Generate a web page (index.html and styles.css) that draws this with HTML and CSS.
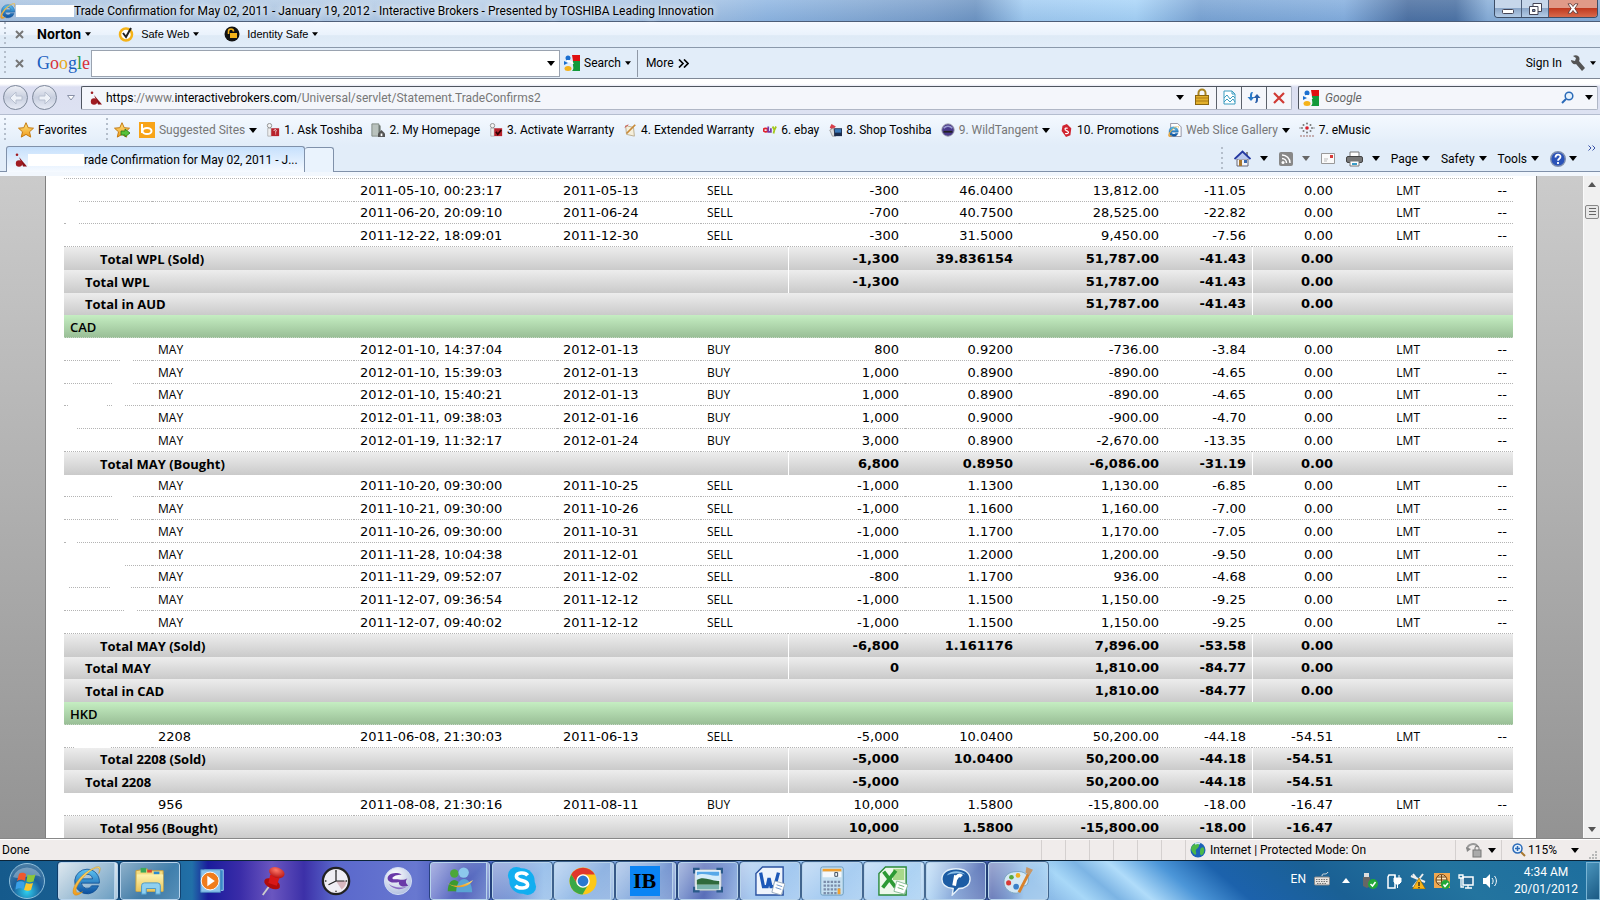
FILE: index.html
```html
<!DOCTYPE HTML>
<html lang="en-US">
<head>
	<meta charset="UTF-8" />
	<title>Trade Confirmation for May 02, 2011 - January 19, 2012</title>

	<link rel="stylesheet" href="styles.css">

	<script type="text/javascript">
		// t: trade row, s: symbol total, c: currency header
		// trade: symbol, date/time, settle date, side, qty, price, proceeds, comm, fee, gaps
		var rows = [
			['t', '', '2011-05-10, 00:23:17', '2011-05-13', 'SELL', '-300', '46.0400', '13,812.00', '-11.05', '0.00', [0, 15]],
			['t', '', '2011-06-20, 20:09:10', '2011-06-24', 'SELL', '-700', '40.7500', '28,525.00', '-22.82', '0.00', [2, 13]],
			['t', '', '2011-12-22, 18:09:01', '2011-12-30', 'SELL', '-300', '31.5000', '9,450.00', '-7.56', '0.00', []],
			['s', 'Total WPL (Sold)', '-1,300', '39.836154', '51,787.00', '-41.43', '0.00', 'sub'],
			['s', 'Total WPL', '-1,300', '', '51,787.00', '-41.43', '0.00', ''],
			['s', 'Total in AUD', '', '', '51,787.00', '-41.43', '0.00', 'sum'],
			['c', 'CAD'],
			['t', 'MAY', '2012-01-10, 14:37:04', '2012-01-13', 'BUY', '800', '0.9200', '-736.00', '-3.84', '0.00', [56, 13]],
			['t', 'MAY', '2012-01-10, 15:39:03', '2012-01-13', 'BUY', '1,000', '0.8900', '-890.00', '-4.65', '0.00', [48, 21]],
			['t', 'MAY', '2012-01-10, 15:40:21', '2012-01-13', 'BUY', '1,000', '0.8900', '-890.00', '-4.65', '0.00', [4, 39, 49, 12]],
			['t', 'MAY', '2012-01-11, 09:38:03', '2012-01-16', 'BUY', '1,000', '0.9000', '-900.00', '-4.70', '0.00', [0, 13]],
			['t', 'MAY', '2012-01-19, 11:32:17', '2012-01-24', 'BUY', '3,000', '0.8900', '-2,670.00', '-13.35', '0.00', []],
			['s', 'Total MAY (Bought)', '6,800', '0.8950', '-6,086.00', '-31.19', '0.00', 'sub'],
			['t', 'MAY', '2011-10-20, 09:30:00', '2011-10-25', 'SELL', '-1,000', '1.1300', '1,130.00', '-6.85', '0.00', [48, 21]],
			['t', 'MAY', '2011-10-21, 09:30:00', '2011-10-26', 'SELL', '-1,000', '1.1600', '1,160.00', '-7.00', '0.00', [54, 13]],
			['t', 'MAY', '2011-10-26, 09:30:00', '2011-10-31', 'SELL', '-1,000', '1.1700', '1,170.00', '-7.05', '0.00', [2, 11]],
			['t', 'MAY', '2011-11-28, 10:04:38', '2011-12-01', 'SELL', '-1,000', '1.2000', '1,200.00', '-9.50', '0.00', [0, 61]],
			['t', 'MAY', '2011-11-29, 09:52:07', '2011-12-02', 'SELL', '-800', '1.1700', '936.00', '-4.68', '0.00', [0, 5, 46, 21]],
			['t', 'MAY', '2011-12-07, 09:36:54', '2011-12-12', 'SELL', '-1,000', '1.1500', '1,150.00', '-9.25', '0.00', [60, 13]],
			['t', 'MAY', '2011-12-07, 09:40:02', '2011-12-12', 'SELL', '-1,000', '1.1500', '1,150.00', '-9.25', '0.00', []],
			['s', 'Total MAY (Sold)', '-6,800', '1.161176', '7,896.00', '-53.58', '0.00', 'sub'],
			['s', 'Total MAY', '0', '', '1,810.00', '-84.77', '0.00', ''],
			['s', 'Total in CAD', '', '', '1,810.00', '-84.77', '0.00', 'sum'],
			['c', 'HKD'],
			['t', '2208', '2011-06-08, 21:30:03', '2011-06-13', 'SELL', '-5,000', '10.0400', '50,200.00', '-44.18', '-54.51', [10, 37]],
			['s', 'Total 2208 (Sold)', '-5,000', '10.0400', '50,200.00', '-44.18', '-54.51', 'sub'],
			['s', 'Total 2208', '-5,000', '', '50,200.00', '-44.18', '-54.51', ''],
			['t', '956', '2011-08-08, 21:30:16', '2011-08-11', 'BUY', '10,000', '1.5800', '-15,800.00', '-18.00', '-16.47', []],
			['s', 'Total 956 (Bought)', '10,000', '1.5800', '-15,800.00', '-18.00', '-16.47', 'sub']
		];

		function addCell(tr, text, className, span){
			var td = document.createElement('td');
			td.className = className;
			if(span){
				td.colSpan = span;
			}
			td.appendChild(document.createTextNode(text));
			tr.appendChild(td);
			return td;
		}

		function addTrade(tr, r){
			var first = addCell(tr, '', 'acct');
			var gaps = r[10];
			for(var i=0; i<gaps.length; i+=2){
				var gap = document.createElement('span');
				gap.className = 'gap';
				gap.style.left = gaps[i] + 'px';
				gap.style.width = gaps[i+1] + 'px';
				first.appendChild(gap);
			}
			addCell(tr, r[1], /^\d/.test(r[1]) ? 'num' : 'code');
			addCell(tr, r[2], 'num');
			addCell(tr, r[3], 'num');
			addCell(tr, r[4], 'code');
			for(i=5; i<10; i++){
				addCell(tr, r[i], 'right num');
			}
			addCell(tr, 'LMT', 'right code');
			addCell(tr, '--', 'right num');
		}

		function addTotal(tr, r){
			addCell(tr, r[1], 'label', 5);
			addCell(tr, r[2], 'right num' + (r[7]==='sum' ? '' : ' rule'));
			addCell(tr, r[3], 'right num');
			addCell(tr, r[4], 'right num');
			addCell(tr, r[5], 'right num');
			addCell(tr, r[6], 'right num rule');
			addCell(tr, '', 'label', 2);
		}

		window.onload = function(){
			var body = document.getElementById('trades');
			for(var i=0; i<rows.length; i++){
				var tr = document.createElement('tr');
				if(rows[i][0]==='t'){
					tr.className = 'trade';
					addTrade(tr, rows[i]);
				} else if(rows[i][0]==='s'){
					tr.className = 'total ' + rows[i][7];
					addTotal(tr, rows[i]);
				} else {
					tr.className = 'currency';
					addCell(tr, rows[i][1], '', 12);
				}
				body.appendChild(tr);
			}
		};
	</script>
</head>

<body>
	<svg class="defs" aria-hidden="true">
		<defs>
			<linearGradient id="gold" x1="0" y1="0" x2="0" y2="1"><stop offset="0" stop-color="#ffe680"/><stop offset="1" stop-color="#f09a1c"/></linearGradient>
			<linearGradient id="ieBlue" x1="0" y1="0" x2="0" y2="1"><stop offset="0" stop-color="#5cc4f4"/><stop offset="1" stop-color="#0b4f9e"/></linearGradient>
			<linearGradient id="folder" x1="0" y1="0" x2="0" y2="1"><stop offset="0" stop-color="#fdf3b0"/><stop offset="1" stop-color="#e9c55a"/></linearGradient>
			<radialGradient id="orb" cx=".5" cy=".8" r=".8"><stop offset="0" stop-color="#2fd0f0"/><stop offset=".5" stop-color="#1a5f9a"/><stop offset="1" stop-color="#4f7fa5"/></radialGradient>
			<radialGradient id="ball" cx=".4" cy=".3" r=".8"><stop offset="0" stop-color="#ffffff"/><stop offset="1" stop-color="#a9b9dc"/></radialGradient>
			<radialGradient id="redBall" cx=".4" cy=".3" r=".8"><stop offset="0" stop-color="#ff7a6a"/><stop offset="1" stop-color="#b00808"/></radialGradient>
		</defs>
		<symbol id="caret" viewBox="0 0 8 5"><path d="M0 0h8L4 5z" fill="currentColor"/></symbol>
		<symbol id="ie" viewBox="2 2 28 28"><path d="M16 5a11.5 11.5 0 1 0 10.800 15.500h-6.300a5.300 5.300 0 0 1-9.700-2.500h16.700A11.5 11.5 0 0 0 16 5zm-5.200 9a5.300 5.300 0 0 1 10.400 0z" fill="url(#ieBlue)" stroke="#0a4a90" stroke-width=".7"/><path d="M27 9c3-6 1-8-5-5C12 8 2 20 3 27c1 4 6 2 9-1-5 2-7 1-6-3C8 16 18 6 24 4c4-1 4 1 3 5z" fill="url(#gold)" stroke="#c98a10" stroke-width=".4"/></symbol>
		<symbol id="star" viewBox="0 0 16 16"><path d="M8 .7l2.200 5 5.300.5-4 3.600 1.200 5.300L8 12.400l-4.700 2.700 1.200-5.300-4-3.600 5.300-.5z" fill="url(#gold)" stroke="#c47a10"/></symbol>
		<symbol id="ibkr" viewBox="0 0 12 14"><circle cx="2" cy="1.700" r="1.300" fill="#a01c22"/><path d="M4 4l8 9.500H8z" fill="#8c1218"/><circle cx="4" cy="10.500" r="3.200" fill="#a01c22"/></symbol>
		<symbol id="gg" viewBox="0 0 16 16"><path d="M8 0h8v6h-7z" fill="#e01010"/><path d="M9 6h7v10H8c3-3 0-5 1-10z" fill="#139a3a"/><circle cx="4" cy="3" r="2.500" fill="#1b6fd0"/><path d="M0 6l4 2-4 2z" fill="#1b6fd0"/><ellipse cx="4" cy="13.500" rx="3.500" ry="2.500" fill="#f5b21a"/><path d="M3 6c3 0 5 1 6 3" stroke="#fff" stroke-width="2" fill="none"/></symbol>
		<symbol id="shopper" viewBox="0 0 16 16"><circle cx="4" cy="3" r="2.500" fill="#f4f4f4" stroke="#888"/><path d="M2 6h4v9H2z" fill="#eee" stroke="#999" stroke-width=".7"/><path d="M6 6h9v9H6z" fill="#b8222c"/></symbol>
	</svg>

	<header class="title-bar">
		<svg class="i16"><use href="#ie"/></svg>
		<span class="redacted"></span>
		<h1>Trade Confirmation for May 02, 2011 - January 19, 2012 - Interactive Brokers - Presented by TOSHIBA Leading Innovation</h1>
		<div class="window-buttons">
			<button type="button" aria-label="Minimize"><svg width="12" height="12" viewBox="0 0 12 12"><rect x=".5" y="6.500" width="11" height="4" rx="1" fill="#fff" stroke="#445"/></svg></button>
			<button type="button" aria-label="Restore"><svg width="13" height="12" viewBox="0 0 13 12"><path d="M4 .5h8.500v8H4z" fill="#fff" stroke="#445"/><path d="M.5 3.500H9v8H.5z" fill="#fff" stroke="#445"/><path d="M3.500 6.500H6v2H3.500z" fill="#7a93b8" stroke="#445"/></svg></button>
			<button type="button" class="close" aria-label="Close"><svg width="12" height="11" viewBox="0 0 12 11"><path d="M1 .8h3l2 2.700 2-2.700h3L7.800 5.500 11 10.200H8L6 7.500l-2 2.700H1l3.200-4.700z" fill="#fff" stroke="#533" stroke-width=".8"/></svg></button>
		</div>
	</header>

	<div class="bar norton">
		<span class="grip"></span>
		<button type="button" class="dismiss" aria-label="Close Norton toolbar"><svg width="9" height="9" viewBox="0 0 9 9"><path d="M1 1l7 7M8 1L1 8" stroke="#777" stroke-width="2"/></svg></button>
		<button type="button" class="brand">Norton<svg class="caret small"><use href="#caret"/></svg></button>
		<button type="button" class="safe-web">
			<svg class="i16" viewBox="0 0 16 16"><circle cx="8" cy="8.500" r="6" fill="#fff" stroke="#f5b318" stroke-width="2.500"/><path d="M5 7l3 4 5-9" stroke="#222" stroke-width="2" fill="none"/></svg>
			Safe Web<svg class="caret small"><use href="#caret"/></svg>
		</button>
		<button type="button">
			<svg class="i16" viewBox="0 0 16 16"><circle cx="8" cy="8" r="7.500" fill="#111"/><path d="M4.500 8V5.500a2.500 2.500 0 0 1 5 0" stroke="#f5b318" stroke-width="1.600" fill="none"/><rect x="6" y="7" width="7" height="5" fill="#f5b318"/></svg>
			Identity Safe<svg class="caret small"><use href="#caret"/></svg>
		</button>
	</div>

	<div class="bar google">
		<span class="grip"></span>
		<button type="button" class="dismiss" aria-label="Close Google toolbar"><svg width="9" height="9" viewBox="0 0 9 9"><path d="M1 1l7 7M8 1L1 8" stroke="#777" stroke-width="2"/></svg></button>
		<span class="logo"><b class="g1">G</b><b class="g2">o</b><b class="g3">o</b><b class="g1">g</b><b class="g4">l</b><b class="g2">e</b></span>
		<div class="query">
			<input type="text" aria-label="Google toolbar search">
			<button type="button" aria-label="Search history"><svg class="caret"><use href="#caret"/></svg></button>
		</div>
		<button type="button" class="search"><svg class="i16"><use href="#gg"/></svg>Search<svg class="caret small"><use href="#caret"/></svg></button>
		<span class="divider"></span>
		<button type="button">More <svg width="11" height="9" viewBox="0 0 11 9"><path d="M1 .5l4 4-4 4M6 .5l4 4-4 4" stroke="#000" stroke-width="1.700" fill="none"/></svg></button>
		<a class="sign-in" href="#">Sign In</a>
		<button type="button" aria-label="Toolbar options"><svg class="i16" viewBox="0 0 16 16"><path d="M1 5l4 1 1-3-3-2c4-2 8 1 6 5l6 7-3 3-6-7C4 10 1 8 1 5z" fill="#555"/></svg><svg class="caret small"><use href="#caret"/></svg></button>
	</div>

	<div class="address-bar">
		<button type="button" class="nav" aria-label="Back"><svg width="16" height="14" viewBox="0 0 16 14"><path d="M8 1L2 7l6 6V9h6V5H8z" fill="#eef2f8" stroke="#b8c0d0"/></svg></button>
		<button type="button" class="nav" aria-label="Forward"><svg width="16" height="14" viewBox="0 0 16 14"><path d="M8 1l6 6-6 6V9H2V5h6z" fill="#eef2f8" stroke="#b8c0d0"/></svg></button>
		<button type="button" class="recent" aria-label="Recent pages"><svg width="8" height="6" viewBox="0 0 8 6"><path d="M.5.500h7L4 5z" fill="#fff" stroke="#8a92a8"/></svg></button>
		<div class="field location">
			<svg width="14" height="14"><use href="#ibkr"/></svg>
			<div class="url" role="textbox" aria-label="Address"><b>https</b>://www.<b>interactivebrokers.com</b>/Universal/servlet/Statement.TradeConfirms2</div>
			<button type="button" aria-label="Show addresses"><svg class="caret"><use href="#caret"/></svg></button>
			<button type="button" class="lock" aria-label="Security report"><svg width="14" height="17" viewBox="0 0 14 17"><path d="M3.500 8V5a3.500 3.500 0 0 1 7 0v3" fill="none" stroke="#a98420" stroke-width="2"/><rect x=".5" y="7.500" width="13" height="9" fill="#e2b02c" stroke="#8a6510"/><path d="M1 10h12M1 13h12" stroke="#a97a14"/></svg></button>
			<button type="button" class="boxed" aria-label="Compatibility view"><svg width="13" height="15" viewBox="0 0 13 15"><path d="M1 1h8l3 3v10H1zM9 1v3h3M1 8l3-3 3 4 3-3 2 2M1 12l3-3 3 3 3-3 2 3" fill="#fff" stroke="#3a9cc0"/></svg></button>
			<button type="button" class="boxed" aria-label="Refresh"><svg width="14" height="13" viewBox="0 0 14 13"><path d="M6 1C3 1 3 3 3 6H.5L4 10l3.500-4H5c0-2 0-3 1-5z" fill="#2a7ac8"/><path d="M8 12c3 0 3-2 3-5h2.500L10 3 6.500 7H9c0 2 0 3-1 5z" fill="#2a5ea8"/></svg></button>
			<button type="button" class="boxed" aria-label="Stop"><svg width="12" height="12" viewBox="0 0 12 12"><path d="M1 1l10 10M11 1L1 11" stroke="#d03a34" stroke-width="2.200"/></svg></button>
		</div>
		<div class="field web-search">
			<svg class="i16"><use href="#gg"/></svg>
			<input type="text" placeholder="Google" aria-label="Search the web">
			<button type="button" aria-label="Search"><svg width="13" height="13" viewBox="0 0 13 13"><circle cx="8" cy="5" r="3.800" fill="#e6f2fd" stroke="#2a6ab8" stroke-width="1.500"/><path d="M5 8l-4 4" stroke="#2a6ab8" stroke-width="2"/></svg></button>
			<button type="button" aria-label="Search options"><svg class="caret"><use href="#caret"/></svg></button>
		</div>
	</div>

	<nav class="bar favorites">
		<span class="grip"></span>
		<button type="button" class="fav-button"><svg class="i16"><use href="#star"/></svg>Favorites</button>
		<span class="grip"></span>
		<div class="links">
			<button type="button" aria-label="Add to favorites bar"><svg class="i16" viewBox="0 0 16 16"><use href="#star"/><path d="M7 9h4V7l5 4-5 4v-2H7z" fill="#57c23a" stroke="#2a7a1a" stroke-width=".8"/></svg></button>
			<button type="button" class="dim"><svg class="i16" viewBox="0 0 16 16"><path d="M0 0h16v16H0z" fill="#f8a418"/><path d="M3 2v9" stroke="#fff" stroke-width="2"/><ellipse cx="8" cy="9" rx="4.500" ry="3" fill="none" stroke="#fff" stroke-width="2"/></svg>Suggested Sites<svg class="caret"><use href="#caret"/></svg></button>
			<a href="#"><svg class="i14" viewBox="0 0 16 16"><use href="#shopper"/><path d="M9 9c1-3 4-1 2 1v1M11 12v1" stroke="#fff" fill="none"/></svg>1. Ask Toshiba</a>
			<a href="#"><svg class="i14" viewBox="0 0 16 16"><path d="M1 1h8v14H1z" fill="#b9c2bd" stroke="#7a857e"/><path d="M9 2l2 1v12H9z" fill="#707a74"/><path d="M8 12l4-4 4 4v4H8z" fill="#555"/><path d="M11 12h2v3h-2z" fill="#fff"/></svg>2. My Homepage</a>
			<a href="#"><svg class="i14" viewBox="0 0 16 16"><use href="#shopper"/><path d="M8 10l2 3 4-5" stroke="#300" stroke-width="2" fill="none"/></svg>3. Activate Warranty</a>
			<a href="#"><svg class="i14" viewBox="0 0 16 16"><path d="M3 3l9 2 1 10-9-2z" fill="#f5efdc" stroke="#b8a888"/><path d="M4 12L14 2" stroke="#c88a3a" stroke-width="2"/><path d="M2 5l4-3" stroke="#c33"/></svg>4. Extended Warranty</a>
			<a href="#"><svg class="i14" viewBox="0 0 16 16"><ellipse cx="3" cy="8" rx="2.500" ry="2" fill="none" stroke="#e0202c" stroke-width="2"/><path d="M6 4v6h3V6" stroke="#7a3aa8" stroke-width="2" fill="none"/><path d="M11 4l2 4 2-4M13 8l-1 4" stroke="#a4c81c" stroke-width="2" fill="none"/></svg>6. ebay</a>
			<a href="#"><svg class="i14" viewBox="0 0 16 16"><path d="M4 1l5 3-4 4-3-3z" fill="#d8404c"/><path d="M2 8l4-2 3 9H5z" fill="#ddd" stroke="#999"/><path d="M7 6h9v9H7z" fill="#1c2c4c"/><path d="M8 7h7v4H8z" fill="#3a78b8"/></svg>8. Shop Toshiba</a>
			<button type="button" class="dim"><svg class="i14" viewBox="0 0 16 16"><circle cx="8" cy="8" r="7" fill="#4a3a8c" stroke="#889"/><path d="M3 6c3-3 7-3 10 0" stroke="#9a9ad0" stroke-width="2" fill="none"/><path d="M3 10h10" stroke="#222" stroke-width="2"/></svg>9. WildTangent<svg class="caret"><use href="#caret"/></svg></button>
			<a href="#"><svg class="i14" viewBox="0 0 16 16"><path d="M4 3l5-2 5 5-1 8-5 2-5-7z" fill="#d02430"/><path d="M10 6c-4-1-4 2-1 3s2 4-2 3" stroke="#fff" stroke-width="1.400" fill="none"/></svg>10. Promotions</a>
			<button type="button" class="dim"><svg class="i14" viewBox="0 0 16 16"><path d="M3 .5h8l4 4v11H3z" fill="#fff" stroke="#889"/><svg x="0" y="3" width="13" height="13"><use href="#ie"/></svg></svg>Web Slice Gallery<svg class="caret"><use href="#caret"/></svg></button>
			<a href="#"><svg class="i16" viewBox="0 0 16 16"><circle cx="8" cy="6" r="1.800" fill="#d8202c"/><g fill="#777"><circle cx="8" cy="1.500" r="1"/><circle cx="8" cy="10.500" r="1"/><circle cx="3" cy="6" r="1"/><circle cx="13" cy="6" r="1"/><circle cx="4.500" cy="3" r="1"/><circle cx="11.500" cy="3" r="1"/><circle cx="4.500" cy="9" r="1"/><circle cx="11.500" cy="9" r="1"/><circle cx="1" cy="6" r=".7"/><circle cx="15" cy="6" r=".7"/></g><path d="M1 14h14" stroke="#b99" stroke-width="1.500" stroke-dasharray="2 1"/></svg>7. eMusic</a>
		</div>
	</nav>

	<div class="tab-row">
		<div class="tab"><svg width="14" height="14"><use href="#ibkr"/></svg><span class="redacted"></span>rade Confirmation for May 02, 2011 - J...</div>
		<button type="button" class="new-tab" aria-label="New tab"></button>
		<div class="commands">
			<span class="grip"></span>
			<button type="button" aria-label="Home"><svg width="17" height="17" viewBox="0 0 17 17"><path d="M3 9h11v7H3z" fill="#f2f4fa" stroke="#667"/><path d="M12 2h2v4h-2z" fill="#888"/><path d="M.5 9l8-7.500 8 7.500" fill="#b9c8ee" stroke="#2438a0" stroke-width="1.800"/><path d="M5 10h3v6H5z" fill="#a87830"/><path d="M10 10h3v3h-3z" fill="#3a6ab0"/></svg><svg class="caret"><use href="#caret"/></svg></button>
			<button type="button" class="dim" aria-label="Feeds"><svg class="i14" viewBox="0 0 14 14"><rect width="14" height="14" rx="2" fill="#888"/><circle cx="4" cy="10.500" r="1.500" fill="#fff"/><path d="M3 6.500a4.500 4.500 0 0 1 4.500 4.500M3 3a8 8 0 0 1 8 8" stroke="#fff" stroke-width="1.500" fill="none"/></svg><svg class="caret"><use href="#caret"/></svg></button>
			<button type="button" aria-label="Mail"><svg width="14" height="11" viewBox="0 0 14 11"><path d="M.5.500h13v10H.5z" fill="#fafafa" stroke="#999"/><path d="M9 2h3v3H9z" fill="#d83a3a"/><path d="M3 6h4M3 8h3" stroke="#bbb"/></svg></button>
			<button type="button" aria-label="Print"><svg width="17" height="16" viewBox="0 0 17 16"><path d="M4 1h9v5H4z" fill="#fff" stroke="#777"/><rect x=".5" y="5.500" width="16" height="6" rx="1.500" fill="#777" stroke="#444"/><path d="M4 10h9v5H4z" fill="#fff" stroke="#777"/><path d="M6 12h5v2H6z" fill="#3a9cc8"/></svg><svg class="caret"><use href="#caret"/></svg></button>
			<button type="button" class="menu">Page<svg class="caret"><use href="#caret"/></svg></button>
			<button type="button" class="menu">Safety<svg class="caret"><use href="#caret"/></svg></button>
			<button type="button" class="menu">Tools<svg class="caret"><use href="#caret"/></svg></button>
			<button type="button" class="help" aria-label="Help"><svg class="i16" viewBox="0 0 16 16"><circle cx="8" cy="8" r="7.300" fill="#2a52b8" stroke="#8090b0" stroke-width="1.400"/><path d="M5.500 6.500c0-4 5-3.500 5-.8 0 2-2.500 2-2.500 4M8 11v2" stroke="#fff" stroke-width="1.800" fill="none"/></svg><svg class="caret"><use href="#caret"/></svg></button>
			<button type="button" class="overflow" aria-label="More commands"><svg width="8" height="6" viewBox="0 0 8 6"><path d="M.5.500L3 3 .5 5.500M4.500.500L7 3 4.500 5.500" stroke="#3a52a8" fill="none"/></svg></button>
		</div>
	</div>

	<div class="viewport">
		<main class="page">
			<table>
				<colgroup>
					<col class="w-acct"><col class="w-symbol"><col class="w-time"><col class="w-settle"><col class="w-side"><col class="w-qty">
					<col class="w-price"><col class="w-proceeds"><col class="w-side"><col class="w-side"><col class="w-side"><col class="w-side">
				</colgroup>
				<tbody id="trades"></tbody>
			</table>
		</main>
		<div class="scrollbar">
			<button type="button" aria-label="Scroll up"><svg class="caret up"><use href="#caret"/></svg></button>
			<span class="thumb"></span>
			<button type="button" class="down" aria-label="Scroll down"><svg class="caret"><use href="#caret"/></svg></button>
		</div>
	</div>

	<footer class="status-bar">
		<span class="done">Done</span>
		<span class="cell"></span><span class="cell"></span><span class="cell"></span><span class="cell"></span><span class="cell"></span><span class="cell"></span>
		<span class="cell zone"><svg class="i16" viewBox="0 0 16 16"><circle cx="8" cy="8" r="7.500" fill="#1c62b8"/><path d="M3 3c3-3 7-2 6 1S5 7 6 10s-1 4-3 1-3-5 0-8zM11 6c2-2 4 0 3 4s-4 4-4 1 0-4 1-5z" fill="#4cb848"/><path d="M5 2c2-1 4-1 5 0" stroke="#cfe8f8" stroke-width="1.500" fill="none"/></svg>Internet | Protected Mode: On</span>
		<span class="cell filter"><svg class="i16" viewBox="0 0 16 16"><path d="M1 7a6 6 0 0 1 11-2" stroke="#999" stroke-width="2" fill="none"/><path d="M0 5l1 5 4-3z" fill="#888"/><rect x="7" y="8" width="8" height="7" fill="#aaa" stroke="#777"/><path d="M9 8V6a2 2 0 0 1 4 0v2" stroke="#777" fill="none"/></svg><svg class="caret"><use href="#caret"/></svg></span>
		<span class="cell zoom"><svg class="i14" viewBox="0 0 14 14"><path d="M8 8l5 5" stroke="#a87830" stroke-width="2"/><circle cx="5.500" cy="5.500" r="4.500" fill="#e6f2fd" stroke="#2a6ab8" stroke-width="1.500"/><path d="M3 5.500h5M5.500 3v5" stroke="#2a6ab8" stroke-width="1.500"/></svg>115%<svg class="caret"><use href="#caret"/></svg></span>
		<svg class="size-grip" width="9" height="9" viewBox="0 0 9 9"><path d="M6 0h2v2H6zM3 3h2v2H3zM6 3h2v2H6zM0 6h2v2H0zM3 6h2v2H3zM6 6h2v2H6z" fill="#b8b8b8"/></svg>
	</footer>

	<footer class="taskbar">
		<button type="button" class="start" aria-label="Start"><svg width="38" height="38" viewBox="0 0 38 38"><circle cx="19" cy="19" r="17.500" fill="url(#orb)" stroke="#8fc0dc"/><path d="M5 15a15 15 0 0 1 28 0c-9-5-19 4-28 0z" fill="#fff" opacity=".3"/><path d="M11 12c3-2 5-1 7 0l-1 7c-2-1-5-2-8 0z" fill="#f0582c"/><path d="M19.500 12.500c3 1 5 1 8 0l-2 7c-3 1-5 1-7 0z" fill="#8cc63a"/><path d="M8.500 20.500c3-2 6-1 8 0l-1 7c-3-2-5-1-8 0z" fill="#3aa0e8"/><path d="M18 21c2 1 5 1 7 0l-2 7c-2 1-4 1-7 0z" fill="#fcc82c"/></svg></button>
		<button type="button" class="task lit stack" aria-label="Internet Explorer"><svg class="i32"><use href="#ie"/></svg></button>
		<button type="button" class="task" aria-label="Windows Explorer"><svg class="i32" viewBox="0 0 32 32"><path d="M1 5l12-2 1 2h16v22H1z" fill="#f4dc80" stroke="#c8a040"/><path d="M6 2h6v5H6z" fill="#3aa858"/><path d="M13 4h5v3h-5z" fill="#d84830"/><path d="M20 6h6v3h-6z" fill="#2a8ad0"/><path d="M2 9h28v18H2z" fill="url(#folder)"/><path d="M7 30v-9q0-3 3-3h14q3 0 3 3v9h-5v-6H12v6z" fill="#8fd0f0" stroke="#4a98c8"/></svg></button>
		<button type="button" class="task flat" aria-label="Media Player"><svg class="i32" viewBox="0 0 32 32"><path d="M8 4h20v22H8z" fill="#3a88c8" stroke="#9cd0f0"/><path d="M4 4h21v24H4z" fill="#8cc4ec" stroke="#4a8ac0"/><circle cx="14" cy="16" r="9.500" fill="#f07c1c" stroke="#fff"/><path d="M11 10.500l8 5.500-8 5.500z" fill="#fff"/></svg></button>
		<button type="button" class="task flat" aria-label="Pin"><svg class="i32" viewBox="0 0 32 32"><path d="M12 20L4 31" stroke="#ccc" stroke-width="2"/><ellipse cx="14" cy="19" rx="9" ry="5" transform="rotate(25 14 19)" fill="#b00c0c"/><path d="M12 9l10 3-3 9-9-3z" fill="#d81818"/><ellipse cx="19" cy="7" rx="8.500" ry="5.500" transform="rotate(20 19 7)" fill="url(#redBall)"/></svg></button>
		<button type="button" class="task flat" aria-label="Clock"><svg class="i32" viewBox="0 0 32 32"><circle cx="16" cy="16" r="14" fill="#f0eef4" stroke="#222" stroke-width="2.500"/><path d="M16 16h11a11 11 0 0 1-5 9z" fill="#d8b8c0"/><path d="M16 5v11M16 16l-8 4M16 16h9" stroke="#222" stroke-width="1.300"/><g fill="#555"><circle cx="16" cy="5" r="1"/><circle cx="16" cy="27" r="1"/><circle cx="5" cy="16" r="1"/><circle cx="27" cy="16" r="1"/></g></svg></button>
		<button type="button" class="task flat" aria-label="Sync"><svg class="i32" viewBox="0 0 32 32"><circle cx="16" cy="16" r="14.500" fill="url(#ball)" stroke="#d0dcf4"/><path d="M20 9C12 5 4 9 5 14c1 4 7 4 12 3-1 4 4 6 10 4-2-2-4-4-1-8-4 3-9 1-12 1-6 1-6-4 6-5z" fill="#6a3aa8"/><path d="M6 19c5 4 12 5 19 3-5 4-14 4-19-3z" fill="#8a6ac4"/></svg></button>
		<button type="button" class="task stack" aria-label="Messenger"><svg class="i32" viewBox="0 0 32 32"><circle cx="11" cy="8" r="4.500" fill="#4ca83a"/><path d="M4 27c0-16 14-16 14 0z" fill="#3c9a30"/><circle cx="21" cy="7" r="5.500" fill="#8cc8ec"/><path d="M13 28c0-19 17-19 17 0z" fill="#5aa4d4"/><path d="M1 16c7 7 17 7 30-1-5 9-20 11-30 1z" fill="url(#gold)"/></svg></button>
		<button type="button" class="task" aria-label="Skype"><svg class="i32" viewBox="0 0 32 32"><circle cx="10" cy="10" r="9" fill="#12aef0"/><circle cx="22" cy="22" r="9" fill="#12aef0"/><circle cx="16" cy="16" r="13.500" fill="#12aef0"/><path d="M22 10c-3-4-12-3-12 1 0 6 12 3 12 9 0 4-9 5-13 1" stroke="#fff" stroke-width="3.800" fill="none"/></svg></button>
		<button type="button" class="task stack" aria-label="Chrome"><svg class="i32" viewBox="0 0 32 32"><circle cx="16" cy="16" r="14.500" fill="#fcc818"/><path d="M3.500 9A14.500 14.500 0 0 1 28.500 9H16a7 7 0 0 0-6.200 10z" fill="#e0382c"/><path d="M3.500 9a14.500 14.500 0 0 0 12 21.500L22 19a7 7 0 0 1-12.200 0z" fill="#3ba846"/><circle cx="16" cy="16" r="6.500" fill="#2a78d0" stroke="#fff" stroke-width="1.500"/></svg></button>
		<button type="button" class="task stack" aria-label="IB Trader Workstation"><span class="ib">IB</span></button>
		<button type="button" class="task" aria-label="Photo Viewer"><svg class="i32" viewBox="0 0 32 32"><path d="M2 4h28v22H2z" fill="#fff" stroke="#9ab"/><path d="M4 6h24v9H4z" fill="#58a8e8"/><path d="M4 10c8-4 16 2 24 0v6H4z" fill="#d4ecfa"/><path d="M4 15c8-5 16 2 24 1v4H4z" fill="#2f6a3c"/><path d="M4 20h24v5H4z" fill="#7ab4ac"/><path d="M1 8V3h6M25 3h6v5M1 22v5h6M25 27h6v-5" stroke="#2a5a8a" stroke-width="2.500" fill="none"/></svg></button>
		<button type="button" class="task" aria-label="Word"><svg class="i32" viewBox="0 0 32 32"><path d="M8 1h22v30H1V8z" fill="#eef4fc" stroke="#2a52a0" stroke-width="1.500"/><path d="M6 7l3 15h4l2-9 2 9h4l4-15" stroke="#1c58b8" stroke-width="3.500" fill="none"/><path d="M21 16l11 3-4 12-10-3z" fill="#fff" stroke="#9ab"/><path d="M23 20l6 2M22 23l6 2" stroke="#6a90c8"/></svg></button>
		<button type="button" class="task" aria-label="Calculator"><svg class="i32" viewBox="0 0 32 32"><rect x="4" y="1" width="24" height="30" rx="2" fill="#c4dff0" stroke="#6a9abc"/><path d="M6 3h20v3H6z" fill="#f0a030"/><path d="M6 6h20v6H6z" fill="#f4f8fb"/><path d="M19 7h3v4h-3z" fill="none" stroke="#345"/><path d="M7 17h18M7 21h18M7 25h18M7 29h18" stroke="#7a8ca8" stroke-width="2.500" stroke-dasharray="2.500 1.300"/><path d="M22 24h3v6h-3z" fill="#f0a030"/></svg></button>
		<button type="button" class="task stack" aria-label="Excel"><svg class="i32" viewBox="0 0 32 32"><path d="M8 1h22v30H1V8z" fill="#eef8ec" stroke="#2a8a3a" stroke-width="1.500"/><path d="M16 3h12v12H16z" fill="#a8d88a"/><path d="M6 6l13 17M19 5L5 23" stroke="#2c9a34" stroke-width="4"/><path d="M20 16l12 4-4 10-11-3z" fill="#fff" stroke="#8b9"/><path d="M22 20l6 2M21 23l6 2" stroke="#6ab070"/></svg></button>
		<button type="button" class="task" aria-label="RealPlayer"><svg class="i32" viewBox="0 0 32 32"><path d="M16 3c9 0 15 4 15 11 0 6-5 10-12 10l-7 7 1-7C5 23 1 19 1 14 1 7 7 3 16 3z" fill="#1c5ca4" stroke="#e4f0fa" stroke-width="1.500"/><path d="M6 10c4-5 14-6 20-1-6-2-14-2-20 1z" fill="#8cc0e8"/><path d="M14 21l2-11M16 14c1-4 4-5 6-3" stroke="#fff" stroke-width="4" fill="none"/></svg></button>
		<button type="button" class="task" aria-label="Paint"><svg class="i32" viewBox="0 0 32 32"><path d="M14 6c9-1 14 4 13 10s-4 5-6 5 0 8-7 8S1 24 1 17 7 6 14 6z" fill="#d4e8f4" stroke="#7aa4c0"/><circle cx="6" cy="18" r="2.700" fill="#d83a34"/><circle cx="9" cy="12" r="2.500" fill="#5aa83a"/><circle cx="16" cy="10" r="2.500" fill="#f0b020"/><circle cx="14" cy="22" r="3" fill="#3a80c8"/><path d="M29 5L17 28" stroke="#d8822c" stroke-width="3"/><path d="M25 1l7 3-4 6-4-3z" fill="#c89868"/></svg></button>

		<div class="tray">
			<span class="lang">EN</span>
			<svg class="i16 keyboard" viewBox="0 0 16 16"><path d="M8 5c0-4 4 0 6-4" stroke="#ddd" fill="none"/><rect x=".5" y="6" width="15" height="8" rx="1" fill="#e8e4e0" stroke="#888"/><path d="M2 8.500h12M2 10.500h12M3 12.500h10" stroke="#777" stroke-dasharray="1.500 1"/></svg>
			<svg class="caret up"><use href="#caret"/></svg>
			<svg class="i16" viewBox="0 0 16 16"><path d="M2 0h5v4H2z" fill="#ddd"/><path d="M1 4h7v9l-3 2-4-2z" fill="#666"/><circle cx="11" cy="11" r="5" fill="#22a838"/><path d="M8.500 11l2 2 3-4" stroke="#fff" stroke-width="1.500" fill="none"/></svg>
			<svg class="i16" viewBox="0 0 16 16"><path d="M3 2h6v13H2V4z" fill="none" stroke="#fff" stroke-width="1.500"/><path d="M8 5h7v4l-2 2h-3L8 9zM9 2v3M13 2v3M11.500 11v4" fill="#fff" stroke="#fff"/></svg>
			<svg class="i16" viewBox="0 0 16 16"><path d="M1 3l14 6M13 1L3 14M3 1l4 5" stroke="#eee" stroke-width="2"/><path d="M9 5l6.500 11h-13z" fill="#f8b418" stroke="#7a5a00" stroke-width=".6"/><path d="M9 9v4M9 14v1.200" stroke="#222" stroke-width="1.300"/></svg>
			<svg class="i16" viewBox="0 0 16 16"><path d="M0 0h16v15H0z" fill="#f0a850"/><circle cx="7.500" cy="7" r="5.500" fill="#fbe6b8" stroke="#704010"/><path d="M2 7h11M7.500 2v11M3 4h9M3 10h9" stroke="#704010" fill="none"/><circle cx="11.500" cy="11.500" r="4.500" fill="#22a838"/><path d="M9.500 11.500l1.500 2 3-3.500" stroke="#fff" stroke-width="1.500" fill="none"/></svg>
			<svg class="i16" viewBox="0 0 16 16"><path d="M5 4h10v8H5z" fill="#2a6a94" stroke="#fff" stroke-width="1.500"/><path d="M7 15h7M10 12v3M1 2h4v3H1zM3 5v9h3" stroke="#fff" stroke-width="1.300" fill="none"/></svg>
			<svg class="i16" viewBox="0 0 16 16"><path d="M1 5h3l4-4v14l-4-4H1z" fill="#fff"/><path d="M10 5c1.500 2 1.500 4 0 6M12.500 3c2.500 3 2.500 7 0 10" stroke="#fff" fill="none"/></svg>
			<time class="clock" datetime="2012-01-20T04:34">4:34 AM<br>20/01/2012</time>
		</div>
		<button type="button" class="show-desktop" aria-label="Show desktop"></button>
	</footer>
</body>
</html>
```
FILE: styles.css
```css
* {
	box-sizing: border-box;
}
body {
	margin: 0;
	height: 100vh;
	display: flex;
	flex-direction: column;
	overflow: hidden;
	font-family: Roboto, "Open Sans", sans-serif;
	font-size: 12px;
	line-height: 16px;
	color: #000;
	background: #fff;
}
button, input {
	font: inherit;
	color: inherit;
	border: 0;
	padding: 0;
	margin: 0;
	background: none;
}
button {
	display: flex;
	align-items: center;
	white-space: nowrap;
}
a {
	color: inherit;
	text-decoration: none;
}
svg {
	flex: none;
	display: block;
}
.defs {
	position: absolute;
	width: 0;
	height: 0;
}
.i14 { width: 14px; height: 14px; }
.i16 { width: 16px; height: 16px; }
.i32 { width: 30px; height: 30px; }
.caret { width: 8px; height: 5px; }
.caret.small { width: 6px; height: 4px; }
.caret.up { transform: rotate(180deg); }
.grip {
	width: 2px;
	height: 24px;
	flex: none;
	background: repeating-linear-gradient(#b4becb 0 2px, transparent 2px 5px);
}
.redacted {
	background: #fff;
	flex: none;
}

/* window title */

.title-bar {
	display: flex;
	align-items: center;
	flex: none;
	height: 22px;
	border-bottom: 1px solid #4c5d78;
	background: linear-gradient(rgba(255,255,255,.15), rgba(70,110,160,.1)),
		linear-gradient(90deg, #a9c3e0, #b8cfe8 30%, #a8c4e4 43%, #8fb6e2 48%, #84a9d4 54%, #7a9fcc 58%, #6d94c2 61%, #a2ccf2 64%, #a8d4f8 71%, #7aa4d4 75%, #84aede 84%, #4a6ea0 88%, #4a70a2 91%, #88aed8 93%);
}
.title-bar .redacted {
	width: 58px;
	height: 12px;
}
.title-bar h1 {
	margin: 0;
	font-size: 12px;
	font-weight: normal;
	white-space: nowrap;
	text-shadow: 0 0 6px #fff, 0 0 8px #fff;
}
.window-buttons {
	display: flex;
	align-self: flex-start;
	margin-left: auto;
	margin-right: 2px;
	height: 18px;
	border: 1px solid #3c4d66;
	border-top: 0;
	border-radius: 0 0 4px 4px;
	overflow: hidden;
}
.window-buttons button {
	width: 27px;
	justify-content: center;
	border-right: 1px solid #4c5d78;
	background: linear-gradient(#c6d6ea 45%, #8ba6c8 50%, #b4cce6);
}
.window-buttons .close {
	width: 48px;
	border: 0;
	background: linear-gradient(#e09a88 45%, #c03a20 50%, #d86a4c);
}

/* toolbars */

.bar {
	display: flex;
	align-items: center;
	flex: none;
	padding-left: 4px;
}
.norton {
	height: 26px;
	padding-bottom: 1px;
	border-bottom: 1px solid #8b99ab;
	font-family: "Liberation Sans", Arial, sans-serif;
	font-size: 11px;
	background: linear-gradient(#f5f9ff, #eaf2fc 50%, #deeaf6 55%, #e2edf9);
}
.norton button {
	gap: 4px;
}
.bar .dismiss {
	margin-left: 9px;
	width: 22px;
}
.norton .brand {
	font: bold 13px/16px Inter, sans-serif;
}
.norton .safe-web {
	margin: 0 25px 0 27px;
}
.norton .i16 {
	margin-right: 3px;
}
.google {
	height: 31px;
	border-bottom: 1px solid #7f8896;
	background: #e2edf9;
	padding-right: 4px;
}
.google .logo {
	width: 54px;
	font: 18px/22px "Liberation Serif", serif;
}
.google .logo b { font-weight: normal; }
.g1 { color: #1a5fc0; }
.g2 { color: #d8303a; }
.g3 { color: #e8a818; }
.g4 { color: #2a9a4a; }
.query {
	display: flex;
	flex: 0 1 469px;
	height: 27px;
	border: 1px solid #9aa3b0;
	background: #fff;
}
.query input {
	flex: 1;
	min-width: 0;
}
.query button {
	padding: 0 4px;
}
.google button {
	gap: 4px;
}
.google .search {
	margin-left: 4px;
}
.google .divider {
	height: 27px;
	margin: 0 8px 0 6px;
	border-left: 1px solid #8f98a6;
}
.google .sign-in {
	margin-left: auto;
	margin-right: 8px;
}

.address-bar {
	display: flex;
	align-items: center;
	flex: none;
	height: 36px;
	padding: 3px 2px 1px 3px;
	border-bottom: 1px solid #b4bdcf;
	background: linear-gradient(#fff 5px, #dcdff1 8px, #dde2f2);
}
.nav {
	width: 25px;
	height: 25px;
	margin-right: 4px;
	justify-content: center;
	border: 1px solid #7c8799;
	border-radius: 50%;
	background: linear-gradient(#eef0f6, #c8cfdf 50%, #e8ecf6);
}
.recent {
	width: 20px;
	justify-content: center;
}
.field {
	display: flex;
	align-items: center;
	height: 24px;
	border: 1px solid #b0b7c6;
	border-top-color: #4f555f;
	border-left-color: #4f555f;
	border-radius: 2px;
	background: #f4f6fb;
}
.location {
	flex: 1;
	min-width: 0;
	padding-left: 7px;
}
.url {
	flex: 1;
	min-width: 0;
	padding-left: 3px;
	color: #777;
	white-space: nowrap;
	overflow: hidden;
}
.url b {
	color: #000;
	font-weight: normal;
}
.lock {
	padding: 0 7px 2px 11px;
}
.boxed {
	width: 25px;
	height: 22px;
	justify-content: center;
	border-left: 1px solid #5c626c;
}
.web-search {
	width: 300px;
	margin-left: 6px;
	padding: 0 4px;
	gap: 6px;
}
.web-search input {
	flex: 1;
	min-width: 0;
	font-style: italic;
}
.web-search input::placeholder {
	color: #666;
}
.web-search button {
	padding-left: 5px;
}

.favorites {
	height: 30px;
	background: linear-gradient(#f4f9ff, #e2edf9);
}
.fav-button {
	gap: 4px;
	margin: 0 19px 0 12px;
}
.links {
	display: flex;
	gap: 9px;
	padding-left: 6px;
}
.links a, .links button {
	display: flex;
	align-items: center;
	gap: 4px;
	white-space: nowrap;
}
.links .dim {
	color: #777;
}
.dim .caret {
	color: #000;
}

.tab-row {
	display: flex;
	align-items: flex-end;
	flex: none;
	height: 31px;
	padding-left: 6px;
	border-bottom: 4px solid #f2f7fd;
	background: linear-gradient(#8091aa, #8091aa) bottom / 100% 1px no-repeat #e2edf9;
}
.tab {
	display: flex;
	align-items: center;
	width: 299px;
	height: 26px;
	padding-left: 7px;
	border: 1px solid #8091aa;
	border-bottom: 0;
	border-radius: 3px 3px 0 0;
	background: linear-gradient(#c6e0fc, #f6faff);
	white-space: nowrap;
}
.tab .redacted {
	width: 56px;
	height: 12px;
}
.new-tab {
	width: 29px;
	height: 25px;
	border: 1px solid #8091aa;
	border-left: 0;
	border-bottom: 0;
	border-radius: 3px 3px 0 0;
	background: #eaf3fd;
}
.commands {
	display: flex;
	align-items: center;
	gap: 11px;
	height: 27px;
	margin-left: auto;
	padding-right: 4px;
}
.commands button {
	gap: 9px;
}
.commands .dim .caret {
	color: #666;
}
.commands .menu {
	gap: 4px;
}
.commands .help {
	gap: 3px;
}
.commands .overflow {
	align-self: flex-start;
}

/* statement */

.viewport {
	display: flex;
	flex: 1;
	min-height: 0;
	border-bottom: 1px solid #888;
	background: linear-gradient(#cbcbcb, #939393);
}
.page {
	flex: 1;
	min-width: 0;
	margin: 0 46px 0 45px;
	padding: 2px 23px 0 18px;
	border: 1px solid #808080;
	border-width: 0 1px;
	background: #fff;
	overflow: hidden;
}
table {
	width: 100%;
	table-layout: fixed;
	border-collapse: separate;
	border-spacing: 0;
	border-top: 1px dotted #b4b4b4;
}
.w-acct { width: 88px; }
.w-symbol { width: 202px; }
.w-time { width: 203px; }
.w-settle { width: 144px; }
.w-side { width: 87px; }
.w-qty { width: 117px; }
.w-price { width: 114px; }
.w-proceeds { width: 146px; }
td {
	height: 23px;
	padding: 3px 6px 2px;
	white-space: nowrap;
	font-family: "Open Sans", sans-serif;
	font-size: 13px;
}
tr:nth-child(4n+2) td {
	height: 22px;
	padding-top: 2px;
}
.trade td {
	border-bottom: 1px dotted #b4b4b4;
}
.trade .code {
	font-size: 12px;
}
.num {
	font-family: "DejaVu Sans", sans-serif;
}
.trade .acct {
	position: relative;
}
.gap {
	position: absolute;
	bottom: -1px;
	height: 1px;
	background: #fff;
}
.right {
	text-align: right;
}
.total {
	background: linear-gradient(#ededed, #cacaca);
	font-weight: bold;
}
.total .label {
	padding-left: 21px;
}
.total.sub .label {
	padding-left: 36px;
}
.total .rule {
	border-left: 1px solid #fff;
}
.currency {
	background: linear-gradient(#c5eec2, #98bd95);
	font-weight: 600;
}
.currency td {
	border-bottom: 1px dotted #c8d8c8;
}

.scrollbar {
	display: flex;
	flex-direction: column;
	width: 17px;
	padding: 0 1px;
	background: #f0f0f0;
	border-left: 1px solid #fafafa;
}
.scrollbar button {
	height: 17px;
	justify-content: center;
	color: #555;
}
.scrollbar .thumb {
	height: 14px;
	margin-top: 12px;
	border: 1px solid #888;
	border-radius: 2px;
	background: repeating-linear-gradient(#666 0 1px, transparent 1px 3px) center / 7px 8px no-repeat #e8e8e8;
}
.scrollbar .down {
	margin-top: auto;
}

.status-bar {
	display: flex;
	align-items: center;
	flex: none;
	height: 21px;
	padding-right: 2px;
	border-top: 1px solid #fff;
	background: #f0eceb;
}
.done {
	flex: 1;
	padding-left: 2px;
}
.cell {
	display: flex;
	align-items: center;
	gap: 4px;
	width: 24px;
	height: 20px;
	padding-left: 4px;
	border-left: 1px solid #d4d0cf;
}
.cell.zone { width: 270px; }
.cell.filter { width: 46px; padding-left: 10px; gap: 6px; }
.cell.zoom { width: 88px; padding-left: 10px; gap: 2px; }
.cell.zoom .caret { margin-left: 12px; }
.size-grip { align-self: flex-end; }

/* taskbar */

.taskbar {
	display: flex;
	align-items: center;
	flex: none;
	height: 40px;
	border-top: 1px solid #0c2438;
	background: linear-gradient(90deg, #155a8c, #1d6498 10%, #2170a8 12%, #1a1c9c 13%, #3a2ca8 15%, #6a56c0 17%, #3c30a8 19%, #5a68cc 21%, #6878d0 26%, #3446b0 29%, #5070c4 31%, #8cb8e8 34%, #7098d4 41%, #3c54ac 44%, #90bcec 47%, #a0ccf2 58%, #3c54a4 62%, #8cbce8 64%, transparent 66%),
		linear-gradient(40deg, #8cbce8 64%, #a8d8f8 66%, #7cb4e4 68%, #b0dcfa 70%, #4c96d8 73%, #1c62ac 76%, #1a6094 82%, #23749f 90%, #1d6e9e);
}
.start {
	width: 58px;
	padding-left: 8px;
}
.task {
	flex: 0 1 60px;
	height: 38px;
	margin-right: 2px;
	justify-content: center;
	border: 1px solid #b8d4ec;
	outline: 1px solid rgba(10,40,80,.6);
	outline-offset: 0;
	border-radius: 3px;
	background: linear-gradient(135deg, rgba(255,255,255,.5), rgba(255,255,255,.15) 60%, rgba(255,255,255,.25));
}
.task.lit {
	background: linear-gradient(135deg, rgba(255,255,255,.85), rgba(190,220,240,.5));
}
.task.stack {
	border-right: 4px double #b8d4ec;
}
.task.flat {
	border-color: transparent;
	outline: 0;
	background: none;
}
.ib {
	width: 30px;
	height: 30px;
	background: #0a84f4;
	font: bold 22px/30px "Liberation Serif", serif;
	text-align: center;
}
.tray {
	display: flex;
	align-items: center;
	gap: 8px;
	height: 100%;
	margin-left: auto;
	color: #fff;
}
.lang {
	padding-bottom: 4px;
}
.keyboard {
	margin-bottom: 4px;
	margin-right: 4px;
}
.tray .caret {
	margin-right: 4px;
}
.clock {
	width: 80px;
	line-height: 17px;
	text-align: center;
}
.show-desktop {
	width: 14px;
	height: 38px;
	border: 1px solid #7ab4d4;
	background: linear-gradient(135deg, #4a94bc, #1a5a84);
}
```
